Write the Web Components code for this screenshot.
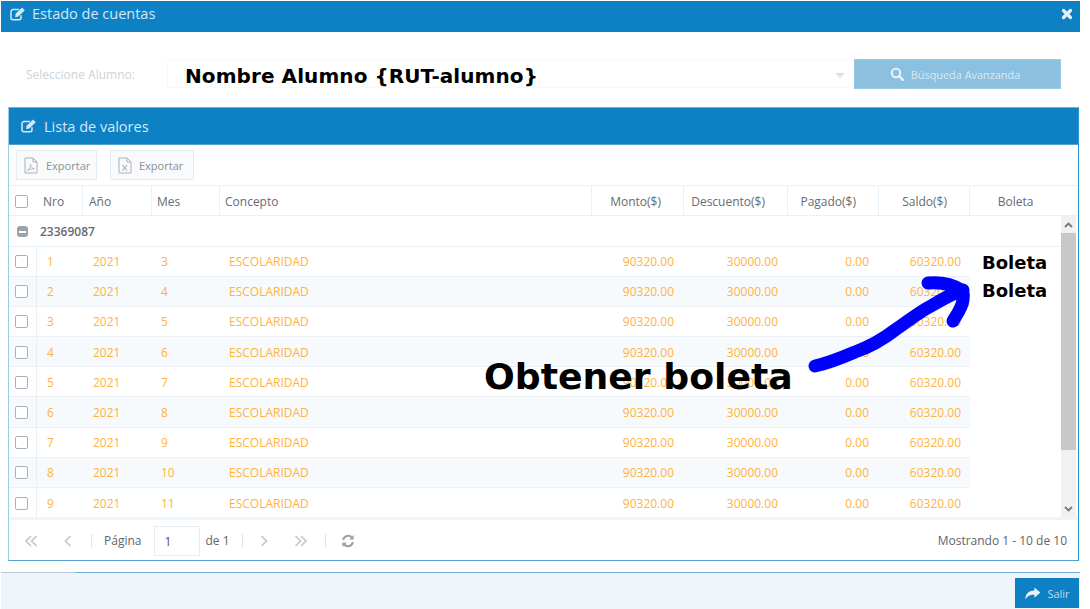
<!DOCTYPE html>
<html lang="es">
<head>
<meta charset="utf-8">
<title>Estado de cuentas</title>
<style>
  html, body { margin: 0; padding: 0; background: #fff; }
  body { font-family: "Open Sans", sans-serif; font-size: 12px; width: 1090px; height: 609px; overflow: hidden; position: relative; }
</style>
</head>
<body>

<template id="modal-tpl">
  <style>
    :host { display: block; width: 1079px; margin: 1px 0 0 1px; }
    header { height: 31px; background: #0e81c5; color: #d5e8f4; display: flex; align-items: flex-start; padding: 4px 9px 0 9px; box-sizing: border-box; font-size: 14.5px; line-height: 18px; }
    .ic { width: 16px; height: 14px; margin: 2px 6px 0 0; flex: none; }
    .t { flex: 1; }
    .x { width: 12px; height: 12px; margin-top: 3px; margin-right: -2px; color: #e6f2f9; }
    main { height: 540px; box-sizing: border-box; display: flow-root; }
  </style>
  <header>
    <x-icon class="ic" name="edit"></x-icon>
    <span class="t"><slot name="title"></slot></span>
    <x-icon class="x" name="close"></x-icon>
  </header>
  <main><slot></slot></main>
  <slot name="foot"></slot>
</template>

<template id="picker-tpl">
  <style>
    :host { display: flex; align-items: center; height: 30px; margin: 27px 19px 18px 0; }
    label { width: 166px; padding-left: 25px; box-sizing: border-box; font-size: 12px; color: #d0d3d6; flex: none; }
    .sel { flex: 1; height: 28px; border: 1px solid #f8f9fa; border-right: 0; box-sizing: border-box; display: flex; align-items: center; padding-left: 17px; position: relative; }
    .name { font: bold 20px "DejaVu Sans", sans-serif; color: #000; letter-spacing: .08px; white-space: nowrap; margin-top: 4px; }
    .caret { position: absolute; right: 9px; top: 12px; border: 5px solid transparent; border-top: 5px solid #dfe3e6; border-bottom: 0; }
    button { width: 207px; height: 30px; flex: none; border: 1px solid #9cc9e4; background: #8bc0e0; color: #d9eaf5; font: 10.9px "Open Sans", sans-serif; display: flex; align-items: center; justify-content: center; gap: 7px; padding: 0 5px 0 0; }
    x-icon { width: 14px; height: 14px; color: #eaf4fa; }
  </style>
  <label><slot name="label"></slot></label>
  <div class="sel"><span class="name"><slot></slot></span><i class="caret"></i></div>
  <button><x-icon name="search"></x-icon><slot name="action"></slot></button>
</template>

<template id="panel-tpl">
  <style>
    :host { display: block; margin: 0 1px 0 7px; border: 1px solid #4f9fd2; border-top-color: #6fb0da; border-left-color: #9ccbe8; border-right-color: #2b92d3; height: 454px; box-sizing: border-box; background: #fff; }
    header { height: 37px; background: #0e81c5; color: #d5e8f4; border-bottom: 1px solid #4f9fd2; box-sizing: border-box; display: flex; align-items: center; padding-left: 12px; font-size: 14.5px; }
    x-icon { width: 16px; height: 14px; margin-right: 7px; }
  </style>
  <header><x-icon name="edit"></x-icon><slot name="title"></slot></header>
  <slot></slot>
</template>

<template id="export-tpl">
  <style>
    :host { display: inline-flex; align-items: center; box-sizing: border-box; height: 30px; padding: 0 0 0 7px; background: #f8fafc; border: 1px solid #e5ecf1; color: #8c9196; font-size: 11px; gap: var(--gap, 8px); }
    x-icon { width: 14px; height: 17px; color: #aab1b7; }
  </style>
  <x-icon id="u"></x-icon><slot></slot>
</template>

<template id="toolbar-tpl">
  <style>
    :host { display: flex; gap: 13px; height: 41px; padding: 5px 0 0 7px; box-sizing: border-box; border-bottom: 1px solid #e6f1f9; }
  </style>
  <slot></slot>
</template>

<template id="cols-tpl">
  <style>
    :host { display: grid; grid-template-columns: 28px 46px 69px 68px 372px 92px 104px 91px 91px 1fr; height: 30px; align-items: stretch; box-sizing: border-box; border-bottom: 1px solid #e6f1f9; font-size: 12px; color: #666b70; }
    span { border-right: 1px solid #e6f1f9; display: flex; align-items: center; padding: 1px 0 0 5px; }
    span.c { padding-left: 0; border-right: 0; }
    span.r { justify-content: flex-end; padding: 1px 22px 0 0; }
    span.m { justify-content: center; border-right: 0; padding: 1px 17px 0 0; }
    i { width: 11px; height: 11px; border: 1px solid #a9b1b8; border-radius: 2px; margin-left: 6px; }
  </style>
  <span class="c"><i></i></span><span style="padding-left:6px">Nro</span><span style="padding-left:6px">Año</span><span>Mes</span><span>Concepto</span>
  <span class="r">Monto($)</span><span class="r">Descuento($)</span><span class="r">Pagado($)</span><span class="r">Saldo($)</span><span class="m">Boleta</span>
</template>

<template id="group-tpl">
  <style>
    :host { display: flex; align-items: center; height: 30.5px; box-sizing: border-box; border-bottom: 1px solid #e6f1f9; font-size: 12px; font-weight: 600; color: #666b70; padding: 1px 0 0 8px; gap: 12px; }
    i { width: 11px; height: 11px; border-radius: 3px; background: #98a4ae; position: relative; }
    i::after { content: ""; position: absolute; left: 2px; right: 2px; top: 5px; height: 2px; background: #fff; }
  </style>
  <i></i><slot></slot>
</template>

<template id="row-tpl">
  <style>
    :host { display: block; height: 30.2px; }
    .r { display: grid; grid-template-columns: 28px 46px 69px 68px 372px 92px 104px 91px 91px 92px; height: 100%; align-items: center; box-sizing: border-box; font-size: 12px; color: #ffb23e; }
    .line { grid-column: 1 / 10; grid-row: 1; height: 100%; border-bottom: 1px solid #ecf0f4; box-sizing: border-box; background: var(--stripe, #fff); }
    .r > span { grid-row: 1; }
    .k { grid-column: 1; height: 100%; border-right: 1px solid #e9eff3; box-sizing: border-box; display: flex; align-items: center; }
    .k i { width: 11px; height: 11px; border: 1px solid #a9b1b8; border-radius: 2px; margin-left: 6px; background: #fff; }
    .p { padding-left: 10px; }
    .q { padding-left: 9px; }
    .a { text-align: right; padding-right: 10px; }
    .b { grid-column: 10; padding-left: 12px; margin-top: var(--lift, 0); font: bold 18px "DejaVu Sans", sans-serif; color: #000; white-space: nowrap; }
  </style>
  <div class="r">
    <div class="line"></div>
    <span class="k"><i></i></span>
    <span class="p" style="grid-column:2" id="n"></span>
    <span class="p" style="grid-column:3" id="y"></span>
    <span class="q" style="grid-column:4" id="m"></span>
    <span class="q" style="grid-column:5">ESCOLARIDAD</span>
    <span class="a" style="grid-column:6">90320.00</span>
    <span class="a" style="grid-column:7">30000.00</span>
    <span class="a" style="grid-column:8">0.00</span>
    <span class="a" style="grid-column:9;padding-right:9px">60320.00</span>
    <span class="b"><slot></slot></span>
  </div>
</template>

<template id="scroll-tpl">
  <style>
    :host { display: flex; height: 301px; position: relative; overflow: hidden; }
    .body { flex: 1; min-width: 0; overflow: hidden; }
    .bar { width: 15px; margin-right: 2px; flex: none; background: #f1f1f1; display: flex; flex-direction: column; align-items: center; }
    .arrow { height: 17px; flex: none; display: flex; align-items: center; justify-content: center; }
    .arrow svg { width: 9px; height: 6px; }
    .thumb { height: 217px; width: 100%; background: #c8c8c8; }
    .gap { flex: 1; }
  </style>
  <div class="body"><slot></slot></div>
  <div class="bar">
    <div class="arrow"><svg viewBox="0 0 9 6"><path d="M1 5l3.5-3.5L8 5" fill="none" stroke="#777" stroke-width="1.8"/></svg></div>
    <div class="thumb"></div><div class="gap"></div>
    <div class="arrow"><svg viewBox="0 0 9 6"><path d="M1 1l3.5 3.5L8 1" fill="none" stroke="#777" stroke-width="1.8"/></svg></div>
  </div>
</template>

<template id="pager-tpl">
  <style>
    :host { display: flex; align-items: center; height: 44px; box-sizing: border-box; border-top: 3px solid #eef5fb; color: #5f666c; font-size: 12px; padding: 0 11px 0 15px; }
    x-icon { color: #c3c8cd; flex: none; width: 14px; height: 12px; }
    .sep { width: 1px; height: 14px; background: #dbe8f2; flex: none; }
    .in { width: 46px; height: 30px; border: 1px solid #e3eef7; box-sizing: border-box; display: flex; align-items: center; padding: 2px 0 0 9px; color: #555; flex: none; margin: 0 5px 0 13px; }
    .end { margin-left: auto; color: #5f666c; }
    x-icon.rf { width: 14px; height: 14px; color: #9aa1a7; }
  </style>
  <x-icon name="first"></x-icon>
  <x-icon name="prev" style="margin-left:23px"></x-icon>
  <i class="sep" style="margin-left:16px"></i>
  <span style="margin-left:12px">Página</span>
  <span class="in">1</span>
  <span>de 1</span>
  <i class="sep" style="margin-left:12px"></i>
  <x-icon name="next" style="margin-left:14px"></x-icon>
  <x-icon name="last" style="margin-left:23px"></x-icon>
  <i class="sep" style="margin-left:17px"></i>
  <x-icon class="rf" name="refresh" style="margin-left:15px"></x-icon>
  <span class="end"><slot></slot></span>
</template>

<template id="foot-tpl">
  <style>
    :host { display: flex; justify-content: flex-end; align-items: flex-start; height: 37px; box-sizing: border-box; background: #eef6fb; border-top: 1px solid #6fabd2; padding: 5px 1px 0 0; position: relative; }
    :host::before { content: ""; position: absolute; left: 0; top: -1px; width: 75px; height: 1px; background: #b9c8d2; }
    button { width: 64px; height: 30px; border: 0; background: #0e81c5; color: #bcdcf0; font: 11px "Open Sans", sans-serif; display: flex; align-items: center; justify-content: center; gap: 6px; padding: 0; }
    x-icon { width: 17px; height: 13px; color: #e8f3fa; }
  </style>
  <button><x-icon name="share"></x-icon><slot></slot></button>
</template>

<template id="notes-tpl">
  <style>
    :host { position: absolute; left: 0; top: 0; width: 1090px; height: 609px; pointer-events: none; display: block; }
    svg { position: absolute; left: 0; top: 0; }
    div { position: absolute; left: 484px; top: 355px; font: bold 36.2px/44px "DejaVu Sans", sans-serif; color: #000; white-space: nowrap; }
  </style>
  <svg width="1090" height="609" viewBox="0 0 1090 609">
    <path d="M815 366c14-3 26-8 40-14 14-5 27-12 40-22 12-8 24-18 36-24 10-6 20-12 32-16M928 283c12-1 24 1 33 7 2 1 3 4 2 10-1 8-6 14-10 21" fill="none" stroke="#00f" stroke-width="13" stroke-linecap="round" stroke-linejoin="round"/>
  </svg>
  <div><slot></slot></div>
</template>

<x-modal>
  <span slot="title">Estado de cuentas</span>
  <x-picker>
    <span slot="label">Seleccione Alumno:</span>
    Nombre Alumno {RUT-alumno}
    <span slot="action">Búsqueda Avanzanda</span>
  </x-picker>
  <x-panel>
    <span slot="title">Lista de valores</span>
    <x-toolbar>
      <x-export kind="pdf" style="width:81px">Exportar</x-export>
      <x-export kind="xls" style="width:84px;--gap:7px">Exportar</x-export>
    </x-toolbar>
    <x-cols></x-cols>
    <x-scroll id="rows">
      <x-group>23369087</x-group>
    </x-scroll>
    <x-pager>Mostrando 1 - 10 de 10</x-pager>
  </x-panel>
  <x-foot slot="foot">Salir</x-foot>
</x-modal>
<x-notes>Obtener boleta</x-notes>

<script>
  const ICONS = {
    edit: ['0 0 16 14', `<path d="M11 8.2v2.6A2 2 0 0 1 9 12.8H3a2 2 0 0 1-2-2V4.6a2 2 0 0 1 2-2h6" fill="none" stroke="currentColor" stroke-width="1.5"/><path d="M5.6 6.7 12 .6l2.8 2.7-6.4 6.3-3.2.6z" fill="currentColor"/>`],
    search: ['0 0 14 14', `<circle cx="6" cy="6" r="4.2" fill="none" stroke="currentColor" stroke-width="2"/><path d="M9.2 9.2 13 13" stroke="currentColor" stroke-width="2.4" stroke-linecap="round"/>`],
    close: ['0 0 12 12', `<path d="M2.5 2.5l7 7M9.5 2.5l-7 7" stroke="currentColor" stroke-width="3.2" stroke-linecap="round"/>`],
    first: ['0 0 14 12', `<path d="M7 1 2 6l5 5M12.5 1l-5 5 5 5" fill="none" stroke="currentColor" stroke-width="1.7"/>`],
    prev: ['0 0 14 12', `<path d="M9.5 1l-5 5 5 5" fill="none" stroke="currentColor" stroke-width="1.7"/>`],
    next: ['0 0 14 12', `<path d="M4.5 1l5 5-5 5" fill="none" stroke="currentColor" stroke-width="1.7"/>`],
    last: ['0 0 14 12', `<path d="M1.5 1l5 5-5 5M7 1l5 5-5 5" fill="none" stroke="currentColor" stroke-width="1.7"/>`],
    refresh: ['0 0 14 14', `<path d="M2.2 6A5 5 0 0 1 11 3.6" fill="none" stroke="currentColor" stroke-width="2"/><path d="M12.6 1v4.4H8.2z" fill="currentColor"/><path d="M11.8 8A5 5 0 0 1 3 10.4" fill="none" stroke="currentColor" stroke-width="2"/><path d="M1.4 13V8.6h4.4z" fill="currentColor"/>`],
    share: ['0 0 18 14', `<path d="M11 .5 17.5 6 11 11.5V8.3C6.5 8.2 3.5 9.3 1.5 13.5.9 8 4.5 3.9 11 3.7z" fill="currentColor"/>`],
    pdf: ['0 0 14 17', `<path d="M1 1h8l4 4v11H1zM9 1v4h4" fill="none" stroke="currentColor"/><path d="M3.2 13.6c2-1 3.4-4 3.4-6.4 0 2.4 1.4 4.2 3.8 4.6-2.4-.2-5 .4-7.2 1.8z" fill="none" stroke="currentColor" stroke-width=".8"/>`],
    xls: ['0 0 14 17', `<path d="M1 1h8l4 4v11H1zM9 1v4h4" fill="none" stroke="currentColor"/><path d="M4.4 8l4.6 5.6M9 8l-4.6 5.6" fill="none" stroke="currentColor" stroke-width="1.1"/>`]
  };

  class XIcon extends HTMLElement {
    static get observedAttributes() {
      return ['name'];
    }
    constructor() {
      super();
      this.attachShadow({ mode: 'open' });
    }
    attributeChangedCallback() {
      const [box, body] = ICONS[this.getAttribute('name')];
      this.shadowRoot.innerHTML = `<style>:host{display:block;flex:none}svg{display:block;width:100%;height:100%}</style><svg viewBox="${box}">${body}</svg>`;
    }
  }
  customElements.define('x-icon', XIcon);

  // all of these only clone their template, so share the boilerplate
  function simple(tag, tpl, setup) {
    customElements.define(tag, class extends HTMLElement {
      constructor() {
        super();
        this.attachShadow({ mode: 'open' });
        this.shadowRoot.appendChild(document.getElementById(tpl).content.cloneNode(true));
        if (setup) setup(this);
      }
    });
  }

  simple('x-modal', 'modal-tpl');
  simple('x-picker', 'picker-tpl');
  simple('x-panel', 'panel-tpl');
  simple('x-toolbar', 'toolbar-tpl');
  simple('x-cols', 'cols-tpl');
  simple('x-group', 'group-tpl');
  simple('x-scroll', 'scroll-tpl');
  simple('x-pager', 'pager-tpl');
  simple('x-foot', 'foot-tpl');
  simple('x-notes', 'notes-tpl');
  simple('x-export', 'export-tpl', el => {
    el.shadowRoot.getElementById('u').setAttribute('name', el.getAttribute('kind'));
  });

  class XRow extends HTMLElement {
    constructor() {
      super();
      this.attachShadow({ mode: 'open' });
      this.shadowRoot.appendChild(document.getElementById('row-tpl').content.cloneNode(true));
    }
    connectedCallback() {
      const s = this.shadowRoot;
      s.getElementById('n').textContent = this.getAttribute('nro');
      s.getElementById('y').textContent = '2021';
      s.getElementById('m').textContent = this.getAttribute('mes');
      if (this.hasAttribute('stripe')) this.style.setProperty('--stripe', '#f6fafd');
    }
  }
  customElements.define('x-row', XRow);

  // the tenth row sits below the fold in the reference, so only nine are built
  const rows = document.getElementById('rows');
  for (let i = 1; i <= 9; i++) {
    const r = document.createElement('x-row');
    r.setAttribute('nro', i);
    r.setAttribute('mes', i + 2);
    if (i % 2 == 0) r.setAttribute('stripe', '');
    if (i <= 2) r.textContent = 'Boleta';
    if (i == 1) r.style.setProperty('--lift', '2px');
    if (i == 2) r.style.setProperty('--lift', '-2px');
    rows.appendChild(r);
  }
</script>
</body>
</html>
